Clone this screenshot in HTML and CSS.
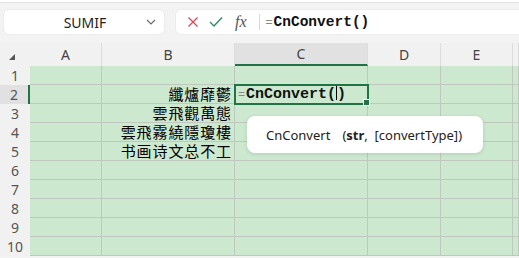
FILE: index.html
```html
<!DOCTYPE html>
<html lang="zh-CN">
<head>
    <meta charset="UTF-8">
    <meta name="viewport" content="width=device-width, initial-scale=1.0">
    <title>CnConvert</title>
    <link rel="stylesheet" href="styles.css">
</head>
<body>
    <div class="toolbar">
        <div class="name-box">
            <span class="name-text">SUMIF</span>
            <svg class="chevron" width="10" height="6" viewBox="0 0 10 6"><path d="M1 1 L5 5 L9 1" fill="none" stroke="#666" stroke-width="1.1"/></svg>
        </div>
        <div class="formula-box">
            <svg class="icon" width="12" height="12" viewBox="0 0 12 12"><path d="M1.5 1.5 L10.5 10.5 M10.5 1.5 L1.5 10.5" stroke="#d9475a" stroke-width="1.3"/></svg>
            <svg class="icon" width="14" height="12" viewBox="0 0 14 12"><path d="M1 6 L5 10 L13 1.5" fill="none" stroke="#2e8b63" stroke-width="1.4"/></svg>
            <span class="fx">fx</span>
            <span class="sep"></span>
            <span class="formula"><span class="eq">=</span>CnConvert()</span>
        </div>
    </div>

    <div class="sheet">
        <div class="hd corner"><span class="tri"></span></div>
        <div class="hd">A</div>
        <div class="hd">B</div>
        <div class="hd active">C</div>
        <div class="hd">D</div>
        <div class="hd">E</div>
        <div class="hd"></div>

        <div class="rh">1</div><div class="c"></div><div class="c"></div><div class="c"></div><div class="c"></div><div class="c"></div><div class="c"></div>
        <div class="rh active">2</div><div class="c"></div><div class="c txt">纖爐靡鬱</div><div class="c sel"><span class="eq">=</span>CnConvert(<span class="caret"></span>)</div><div class="c"></div><div class="c"></div><div class="c"></div>
        <div class="rh">3</div><div class="c"></div><div class="c txt">雲飛觀萬態</div><div class="c"></div><div class="c"></div><div class="c"></div><div class="c"></div>
        <div class="rh">4</div><div class="c"></div><div class="c txt">雲飛霧繞隱瓊樓</div><div class="c"></div><div class="c"></div><div class="c"></div><div class="c"></div>
        <div class="rh">5</div><div class="c"></div><div class="c txt">书画诗文总不工</div><div class="c"></div><div class="c"></div><div class="c"></div><div class="c"></div>
        <div class="rh">6</div><div class="c"></div><div class="c"></div><div class="c"></div><div class="c"></div><div class="c"></div><div class="c"></div>
        <div class="rh">7</div><div class="c"></div><div class="c"></div><div class="c"></div><div class="c"></div><div class="c"></div><div class="c"></div>
        <div class="rh">8</div><div class="c"></div><div class="c"></div><div class="c"></div><div class="c"></div><div class="c"></div><div class="c"></div>
        <div class="rh">9</div><div class="c"></div><div class="c"></div><div class="c"></div><div class="c"></div><div class="c"></div><div class="c"></div>
        <div class="rh">10</div><div class="c"></div><div class="c"></div><div class="c"></div><div class="c"></div><div class="c"></div><div class="c"></div>

        <div class="tip">CnConvert<span class="args">(<b>str</b>,&nbsp; [convertType])</span></div>
    </div>
</body>
</html>
```

FILE: styles.css
```css
body {
    margin: 0;
    font-family: "Noto Sans", "Open Sans", sans-serif;
    background-color: #f3f3f3;
    overflow: hidden;
}
.toolbar {
    display: flex;
    gap: 10px;
    padding: 7px 0 8px 3px;
    border-top: 2px solid #fff;
    box-shadow: inset 0 1px 0 #e2e2e2;
    height: 26px;
}
.name-box {
    width: 162px;
    background-color: #fff;
    border-radius: 6px;
    border: 1px solid #ececec;
    box-sizing: border-box;
    display: flex;
    align-items: center;
    padding-right: 8px;
}
.name-text {
    flex: 1;
    text-align: center;
    font-size: 14px;
    color: #222;
    padding-left: 20px;
}
.formula-box {
    flex: 1;
    background-color: #fff;
    border-radius: 6px 0 0 6px;
    border: 1px solid #ececec;
    border-right: none;
    display: flex;
    align-items: center;
    padding-left: 11px;
    gap: 10px;
}
.fx {
    font-family: "Liberation Serif", serif;
    font-style: italic;
    font-size: 16px;
    color: #555;
    margin-left: 2px;
}
.sep {
    width: 1px;
    height: 16px;
    background-color: #d8d8d8;
    margin-left: 2px;
    margin-right: -4px;
}
.formula {
    font-family: "Liberation Mono", monospace;
    font-weight: bold;
    font-size: 14.5px;
    color: #111;
}
.eq {
    font-family: "Liberation Sans", sans-serif;
    font-weight: normal;
    font-size: 12px;
    color: #888;
    margin-right: 1px;
}
.sheet {
    position: relative;
    display: grid;
    grid-template-columns: 30px 72px 133px 133px 73px 72px 1fr;
    grid-template-rows: 23px repeat(10, 19px);
}
.hd {
    font-size: 14px;
    color: #444;
    display: flex;
    align-items: center;
    justify-content: center;
    border-right: 1px solid #dcdcdc;
    box-sizing: border-box;
    background-color: #f1f1f1;
}
.hd.active {
    background-color: #e1e1e1;
    border-bottom: 2px solid #217346;
}
.corner {
    border-right: none;
    justify-content: flex-start;
    align-items: flex-end;
    padding: 0 0 6px 9px;
}
.tri {
    width: 0;
    height: 0;
    border-left: 6px solid transparent;
    border-bottom: 6px solid #555;
}
.rh {
    font-size: 14px;
    color: #555;
    display: flex;
    align-items: center;
    justify-content: center;
    background-color: #f1f1f1;
    box-sizing: border-box;
}
.rh.active {
    background-color: #e1e1e1;
    border-right: 2px solid #217346;
}
.c {
    background-color: #cce8cf;
    border-right: 1px solid #bfc7bf;
    border-bottom: 1px solid #bfc7bf;
    box-sizing: border-box;
}
.txt {
    font-family: "Noto Sans CJK TC", "Noto Sans CJK SC", serif;
    font-size: 15px;
    letter-spacing: 0.9px;
    line-height: 18px;
    color: #000;
    text-align: right;
    padding-right: 2px;
    white-space: nowrap;
}
.sel {
    position: relative;
    outline: 2px solid #217346;
    outline-offset: -1px;
    font-family: "Liberation Mono", monospace;
    font-weight: bold;
    font-size: 15px;
    line-height: 18px;
    color: #111;
    padding-left: 3px;
    white-space: nowrap;
}
.sel::after {
    content: "";
    position: absolute;
    right: -3px;
    bottom: -3px;
    width: 5px;
    height: 5px;
    background-color: #217346;
    border: 1px solid #fff;
}
.caret {
    display: inline-block;
    width: 1px;
    height: 15px;
    background-color: #000;
    vertical-align: -2px;
}
.tip {
    position: absolute;
    left: 247px;
    top: 73px;
    width: 236px;
    height: 37px;
    box-sizing: border-box;
    background-color: #fff;
    border-radius: 8px;
    box-shadow: 0 1px 4px rgba(0, 0, 0, 0.12);
    font-size: 13px;
    color: #222;
    display: flex;
    align-items: center;
    padding-left: 19px;
    white-space: nowrap;
}
.args {
    margin-left: 12px;
}
```
